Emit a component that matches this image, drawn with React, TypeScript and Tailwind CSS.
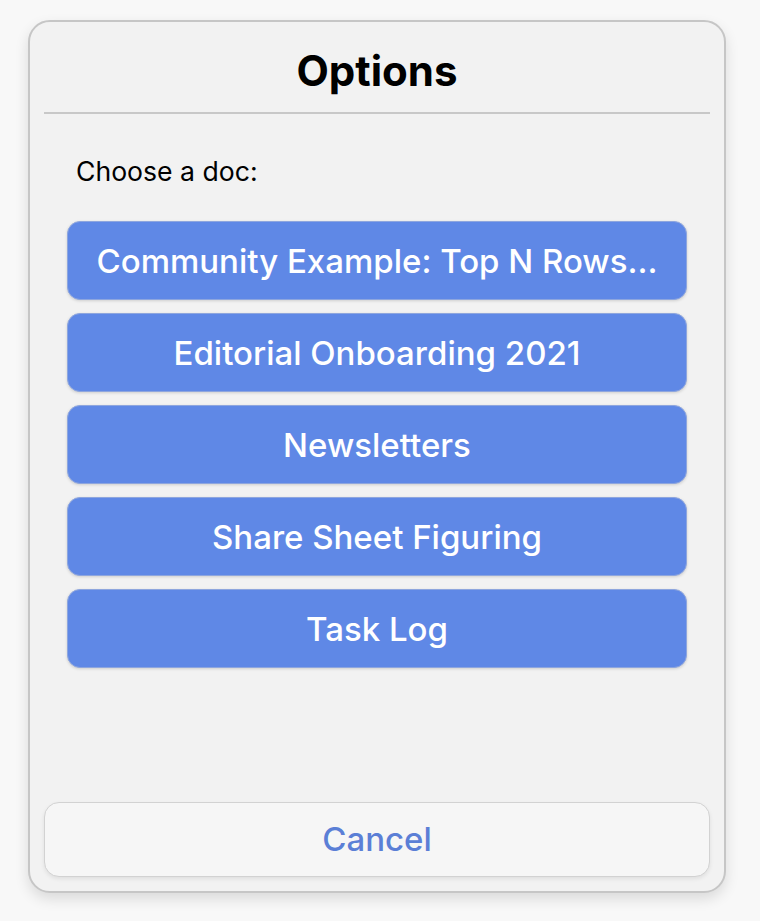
const docs = [
  'Community Example: Top N Rows...',
  'Editorial Onboarding 2021',
  'Newsletters',
  'Share Sheet Figuring',
  'Task Log',
];

export default function App() {
  return (
    <div
      className="min-h-[921px] w-full bg-[#f8f8f8] pt-[20px] px-[28px]"
      style={{ fontFamily: 'Inter, Roboto, "Noto Sans", sans-serif' }}
    >
      <div className="flex h-[873px] w-[698px] flex-col rounded-[22px] border-2 border-[#c6c6c6] bg-[#f2f2f2] shadow-[0_6px_14px_rgba(0,0,0,0.12)]">
        <div className="mx-[14px] flex h-[92px] items-center justify-center border-b-2 border-[#c8c8c8] pt-[8px]">
          <h1 className="text-[42px] font-bold leading-none text-black">Options</h1>
        </div>
        <p className="ml-[46px] mt-[42px] text-[26.6px] leading-[30px] text-black">Choose a doc:</p>
        <div className="mx-[37px] mt-[35px] flex flex-col gap-[13px]">
          {docs.map((d) => (
            <button
              key={d}
              className="flex h-[79px] items-center justify-center rounded-[13px] border border-[#8ea6de] bg-[#5f88e6] pt-[2px] text-[33px] font-medium text-white shadow-[0_1px_3px_rgba(0,0,0,0.15)]"
            >
              {d}
            </button>
          ))}
        </div>
        <div className="flex-1" />
        <button className="mx-[14px] mb-[14px] flex h-[75px] items-center justify-center rounded-[15px] border border-[#d2d2d2] bg-[#f6f6f6] text-[33px] font-medium text-[#5b7fd6] shadow-[0_2px_4px_rgba(0,0,0,0.08)]">
          Cancel
        </button>
      </div>
    </div>
  );
}
